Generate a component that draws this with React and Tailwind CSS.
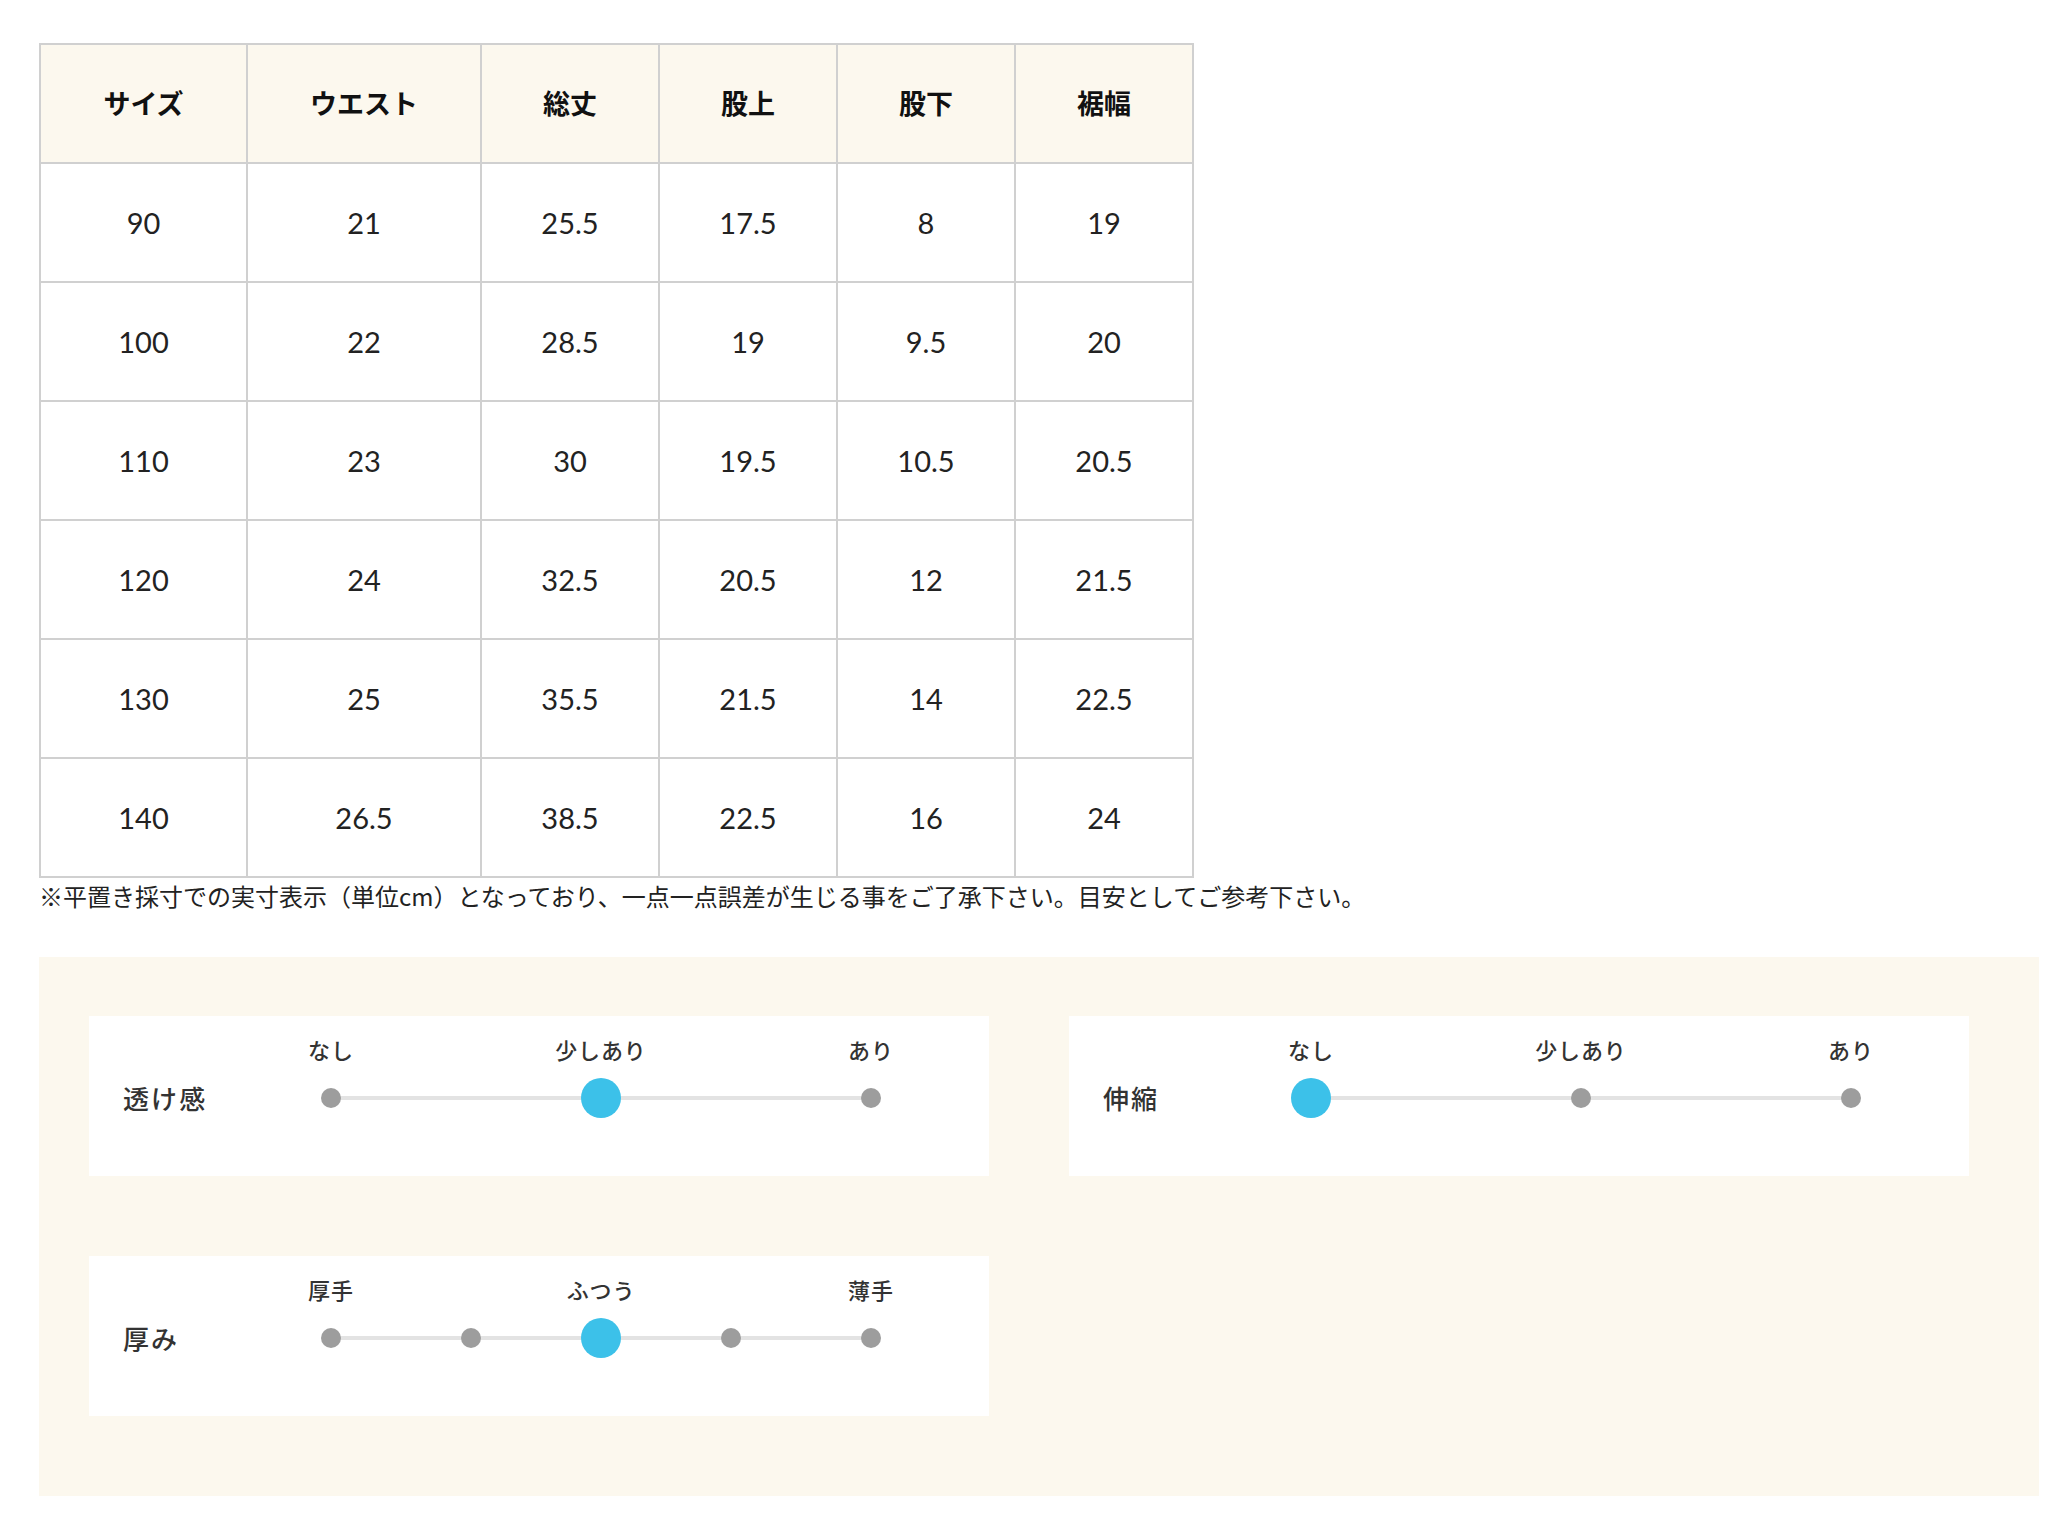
import React from 'react';

const headers = ['サイズ', 'ウエスト', '総丈', '股上', '股下', '裾幅'];
const colWidths = ['w-[207px]', 'w-[234px]', 'w-[178px]', 'w-[178px]', 'w-[178px]', 'w-[178px]'];

const rows = [
  ['90', '21', '25.5', '17.5', '8', '19'],
  ['100', '22', '28.5', '19', '9.5', '20'],
  ['110', '23', '30', '19.5', '10.5', '20.5'],
  ['120', '24', '32.5', '20.5', '12', '21.5'],
  ['130', '25', '35.5', '21.5', '14', '22.5'],
  ['140', '26.5', '38.5', '22.5', '16', '24'],
];

// spacing before each tick; the 5-step scale is not evenly spaced in the original
const gaps3 = ['', 'ml-[150px]', 'ml-[150px]'];
const gaps5 = ['', 'ml-[20px]', 'ml-[10px]', 'ml-[10px]', 'ml-[20px]'];

const scales = [
  { label: '透け感', ticks: ['なし', '少しあり', 'あり'], active: 1 },
  { label: '伸縮', ticks: ['なし', '少しあり', 'あり'], active: 0 },
  { label: '厚み', ticks: ['厚手', '', 'ふつう', '', '薄手'], active: 2 },
];

// one row of the feel chart: name on the left, dots on a line
const Scale = ({ label, ticks, active }) => {
  const gaps = ticks.length === 5 ? gaps5 : gaps3;
  return (
    <div className="flex h-[160px] w-[900px] bg-white pl-[34px] pt-[18px]">
      <div className="mt-[46px] h-[36px] w-[148px] text-[26px] font-medium leading-[36px] tracking-[0.08em] text-[#333]">
        {label}
      </div>
      <div className="relative flex w-[660px]">
        <div className="absolute left-[60px] right-[60px] top-[62px] h-[4px] bg-[#e3e3e3]" />
        {ticks.map((t, i) => (
          <div key={i} className={`relative flex w-[120px] flex-col items-center ${gaps[i]}`}>
            <div className="h-[30px] whitespace-nowrap text-[22px] font-medium leading-[30px] tracking-[0.04em] text-[#333]">
              {t}
            </div>
            <div className="mt-[14px] flex h-[40px] items-center justify-center">
              {i === active ? (
                <span className="block h-[40px] w-[40px] rounded-full bg-[#3cc1e9]" />
              ) : (
                <span className="block h-[20px] w-[20px] rounded-full bg-[#9d9d9d]" />
              )}
            </div>
          </div>
        ))}
      </div>
    </div>
  );
};

const App = () => {
  return (
    <div
      className="min-h-screen bg-white pl-[39px] pt-[43px] text-[#222]"
      style={{ fontFamily: 'Lato, "Noto Sans CJK JP", sans-serif' }}
    >
      {/* Size table */}
      <table className="table-fixed border-collapse">
        <colgroup>
          {colWidths.map((w, i) => (
            <col key={i} className={w} />
          ))}
        </colgroup>
        <thead>
          <tr>
            {headers.map((h) => (
              <th
                key={h}
                className="h-[119px] border-2 border-[#d0d0d0] bg-[#fcf8ee] text-center text-[27px] font-bold text-[#111]"
                style={{ fontFamily: '"Noto Sans CJK JP", sans-serif' }}
              >
                {h}
              </th>
            ))}
          </tr>
        </thead>
        <tbody>
          {rows.map((r, ri) => (
            <tr key={ri}>
              {r.map((v, ci) => (
                <td
                  key={ci}
                  className="h-[119px] border-2 border-[#d0d0d0] text-center text-[29px] text-[#222]"
                >
                  {v}
                </td>
              ))}
            </tr>
          ))}
        </tbody>
      </table>

      <p
        className="text-[24px] leading-[36px] text-[#222]"
        style={{ fontFamily: '"Noto Sans CJK JP", sans-serif' }}
      >
        ※平置き採寸での実寸表示（単位cm）となっており、一点一点誤差が生じる事をご了承下さい。目安としてご参考下さい。
      </p>

      {/* Material feel */}
      <div
        className="mt-[43px] grid w-[2000px] grid-cols-[900px_900px] gap-x-[80px] gap-y-[80px] bg-[#fcf8ee] pb-[80px] pl-[50px] pt-[59px]"
        style={{ fontFamily: '"Noto Sans CJK JP", sans-serif' }}
      >
        {scales.map((s) => (
          <Scale key={s.label} {...s} />
        ))}
      </div>
    </div>
  );
};

export default App;
